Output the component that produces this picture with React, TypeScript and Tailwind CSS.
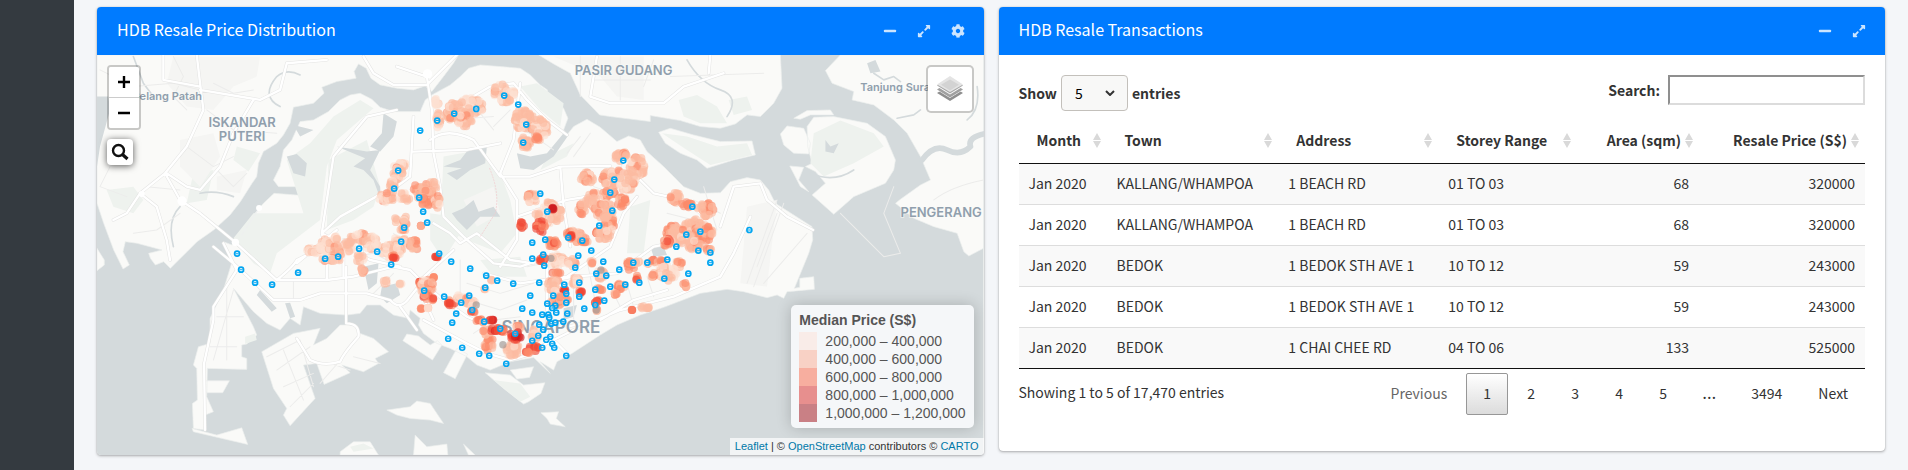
import React from "react";
import { FaCog, FaExpandAlt, FaMinus } from "react-icons/fa";

type Pt = [number, number];
type Blob = [number, number, number, number, number];

const SANS = "font-['Noto_Sans_CJK_SC','Open_Sans',sans-serif]";

/* ---------- Base map geometry (1 screen px = 3 map units) ---------- */

const LAND = [
  // Johor west
  "M291 165H1375L1360 190L1330 230L1295 275L1275 258L1240 270L1190 265L1140 255L1112 235L1098 205L1075 192L1062 215L1068 235L1010 245L965 262L972 280L940 310L880 322L870 370L850 405L830 430L790 455L775 490L770 530L756 550L721 605L690 645L641 690L591 725L561 755L511 805L491 785L466 795L451 775L446 760L486 750L411 730L376 725L369 755L388 795L369 807L341 750L311 670L291 610Z",
  "M291 745L313 780L313 795L291 812Z",
  // Singapore main island
  "M670 725L696 735L731 690L756 650L790 610L822 580L900 586L915 560L835 560L820 540L840 500L850 450L875 420L900 365L940 360L985 335L1020 300L1050 285L1080 280L1115 298L1140 322L1180 335L1260 335L1275 300L1295 285L1350 255L1380 230L1405 205L1440 195L1500 200L1560 205L1590 225L1620 255L1642 270L1635 300L1660 290L1690 325L1703 355L1690 390L1700 405L1720 380L1760 358L1800 382L1850 425L1885 408L1920 420L1940 455L1990 500L2020 530L2050 560L2100 580L2160 578L2190 545L2240 533L2280 540L2305 570L2325 610L2435 680L2437 720L2425 760L2382 865L2398 862L2398 835L2440 830L2442 868L2395 872L2360 875L2350 895L2330 885L2300 893L2230 875L2180 868L2100 880L1990 922L1920 945L1850 975L1800 1005L1715 1060L1670 1085L1660 1110L1620 1085L1650 1120L1600 1072L1530 1085L1470 1110L1430 1095L1400 1070L1350 1045L1310 1030L1270 1000L1255 975L1260 955L1230 930L1225 955L1180 945L1140 915L1100 915L1080 940L1040 945L960 940L910 920L900 975L870 955L840 990L800 970L760 935L700 865L760 980L770 1005L740 1032L725 1035V1070L740 1075V1108L622 1105L620 1190L640 1235L615 1245V1290L580 1285L577 1210L592 1200L590 1105L580 1095L595 1040L630 1030V955L670 870L696 785Z",
  // Jurong Island
  "M785 1055L880 1000L960 985L940 1035L980 1015L1020 975L1060 975L1080 1000L1120 1015L1165 1055L1125 1075L1135 1090L1090 1115L1025 1095L1050 1118L972 1153L950 1090L910 1095L945 1195L870 1277L850 1245L860 1225L820 1165Z",
  "M1220 1002L1255 1008L1290 1035L1312 1022L1325 1035L1297 1080L1208 1022ZM1370 1045L1402 1062L1365 1136L1330 1118Z",
  "M650 1305L725 1283L743 1333L580 1295L576 1285ZM610 1142H688L668 1178H610Z",
  // Southern islands
  "M1160 1230L1230 1220L1250 1203L1290 1210L1330 1270L1290 1260L1230 1255L1190 1245ZM1020 1355L1060 1325L1110 1325L1135 1365H1020ZM1245 1305L1280 1340L1340 1332L1343 1365H1240ZM1390 1332L1425 1365H1405Z",
  "M1455 1118L1530 1125L1570 1155L1634 1148L1622 1180L1585 1205L1570 1212L1510 1165ZM1530 1110L1600 1100L1588 1132L1550 1137ZM1622 1238L1675 1235L1668 1255L1695 1280L1650 1272L1640 1255Z",
  // Pasir Gudang
  "M1615 165H2340L2345 265L2320 310L2280 350L2240 345L2205 372L2160 385L2100 380L2040 362L1950 347V365L1830 350L1798 345L1740 285L1710 220L1660 192Z",
  // Ubin, Ketam, Tekong
  "M1975 397L2010 385L2080 405L2160 425L2255 423L2265 465L2200 480L2120 505L2090 480L2040 460L1995 430Z",
  "M2340 402L2360 378L2410 385L2430 430L2425 462L2380 460L2350 435ZM2380 355L2420 332L2490 330L2500 345L2430 345L2400 358Z",
  "M2420 380L2440 352L2500 350L2600 370L2655 410L2685 480L2680 510L2655 550L2560 590L2500 643L2435 585L2475 550L2445 515L2415 500L2435 490L2422 440ZM2368 498L2410 502L2395 540L2425 575L2400 560Z",
  // Johor east
  "M2520 165H2949V1365V745L2905 768L2890 755L2870 700L2800 680L2740 655L2685 610L2700 598L2760 555L2790 540L2760 470L2720 400L2680 360L2620 315L2555 300L2560 275L2495 250L2475 212Z",
];

const GREEN = [
  "M860 480L930 430L1000 350L1080 300L1120 325L1010 420L980 500L960 660L830 760L810 820L760 790L720 740L700 715L760 640L910 640Z",
  "M985 480L1100 420L1140 560L1120 620L1060 660L980 690Z",
  "M1330 470L1440 450L1500 520L1530 600L1550 700L1500 760L1400 720L1320 680Z",
  "M1290 640L1360 650L1380 700L1330 780L1290 720Z",
  "M1040 530L1110 520L1100 610L1040 620Z",
  "M580 520L640 510L620 600L560 610ZM320 570L400 560L430 600L400 640L340 620Z",
  "M710 440L780 460L745 515L700 480Z",
  "M1560 260L1610 250L1690 310L1680 380L1620 330Z",
  "M1640 470L1720 430L1700 470L1620 510Z",
  "M2035 300L2090 285L2150 320L2180 370L2100 370L2050 350ZM2185 300L2240 290L2255 330L2200 345Z",
  "M1985 400L2060 410L2150 440L2240 430L2255 465L2130 495L2060 450Z",
  "M2440 400L2520 362L2620 400L2650 440L2560 490L2470 530L2430 490Z",
  "M1890 620L1950 600L1930 760L1880 760Z",
  "M1440 780L1560 770L1580 830L1480 830Z",
  "M1480 1140L1560 1150L1590 1190L1560 1205Z",
  "M735 1010L765 1000L770 1020L735 1032Z",
  "M1050 1340L1090 1330L1120 1345L1060 1355Z",
];

const URBAN = [
  "M520 170L780 170L770 230L700 260L640 330L560 320L500 250Z",
  "M540 420L640 400L660 470L600 560L540 500Z",
  "M650 530L740 510L720 580L650 570Z",
  "M1660 170H1930V300L1850 290L1800 230Z",
  "M2240 620L2330 600L2300 860L2220 850Z",
  "M1390 600L1480 560L1500 640L1430 680Z",
];

const LAKES = [
  "M1330 500L1380 480L1400 455L1460 440L1455 490L1410 510L1370 540L1340 520L1385 505Z",
  "M1355 640L1390 625L1420 600L1435 635L1480 620L1500 650L1440 650L1400 690L1370 660Z",
  "M1550 460L1590 470L1640 460L1690 400L1705 405L1660 470L1600 510L1560 505Z",
  "M1150 340L1190 365L1180 410L1140 455L1110 440L1145 400ZM1010 440L1100 455L1140 450L1110 510L1140 560L1142 600L1120 540L1090 510L1060 500L1095 475Z",
  "M860 470L890 462L920 490L915 530L880 520ZM880 375L940 390L900 410Z",
  "M2475 420L2490 440L2515 430L2500 460L2475 455Z",
  "M1950 740L1990 740L2000 765L1960 770Z",
  "M1145 860L1190 850L1200 885L1160 910L1140 890Z",
  "M1690 925L1730 915L1720 950L1690 960Z",
  "M1090 800L1135 790L1130 850L1105 870Z",
  "M2600 190L2625 180L2640 215L2610 220Z",
  "M291 290H325L330 330L300 440L291 500Z",
  "M780 870L830 925L815 935L770 885ZM855 910L870 955L885 950L870 908Z",
];

const CREEKS = [
  "M900 225Q860 205 830 230Q780 290 840 320",
  "M2060 180Q2100 250 2160 270T2180 350",
  "M400 170L430 250L460 290",
  "M600 580Q650 570 700 590",
  "M2930 260Q2940 330 2900 360",
  "M2620 220L2650 240L2680 230L2700 245M2690 355L2740 345L2760 330",
  "M1560 380Q1610 420 1640 400",
  "M2430 520Q2500 550 2560 510",
  "M520 740Q500 660 540 620",
];

const MAJOR = [
  "M590 165L600 250L610 330L560 440L495 520L540 600L600 640L700 722L830 840",
  "M830 840H980L1060 830L1180 800L1230 810L1270 850L1330 900L1400 950L1470 980L1560 980",
  "M830 840Q880 800 890 780L930 760M640 740L700 790L820 900L900 900L960 880H1100L1170 900Q1200 935 1230 890L1270 840",
  "M1280 230L1295 330L1300 460L1320 560L1330 650L1390 710L1480 790L1560 800L1620 780",
  "M1290 420Q1340 380 1420 420L1500 530L1590 530L1680 500L1830 498",
  "M1240 455L1400 450L1500 430M1240 350L1230 530L1190 560M1200 550L1020 650L965 700L970 720",
  "M965 700L1000 470L1100 350L1190 330",
  "M965 700L1110 780L1200 800M890 790L1010 690",
  "M1300 670L1350 700L1380 730L1430 700L1530 780L1600 790",
  "M1350 330L1470 260L1540 250L1580 300L1640 360L1700 405",
  "M1560 250L1540 420L1500 520L1550 600L1550 720L1500 800",
  "M1550 650L1700 600L1760 590M1680 500L1690 620L1710 740",
  "M1920 540L1960 580L2050 600L2100 640M1910 590L1870 640L1830 740L1700 830",
  "M2160 680L2200 560L2280 550L2300 600L2360 650L2438 690",
  "M1600 1050L1720 990L1860 930L2020 890L2160 830L2200 760L2250 650",
  "M1700 980L1800 960L1900 900L2000 870M1620 850L1720 830L1850 820L1960 740L2060 720",
  "M1360 750L1250 850L1300 960M1450 820L1560 850L1700 830M1640 780L1640 1000L1700 1060",
  "M1270 960L1400 1030L1460 1060L1530 1080L1600 1060",
  "M1790 170L1770 290L1830 310H1990L2050 260L2170 220M2130 165L2125 220",
  "M490 165L490 240L600 260M600 270L780 300L840 270L860 190L980 180",
  "M495 520L420 580L380 640L340 660M500 520L560 560L600 570L660 500L700 400L760 300",
  "M420 580L470 620L500 720L510 780",
  "M1090 170L1120 220L1180 255L1280 255L1370 165M1190 200L1280 230",
  "M1038 800V970Q1080 970 1075 1010Q1030 1060 1020 1085Q970 1100 930 1080L890 1015",
  "M670 730L710 810L640 920L640 960L612 1090L615 1290",
  "M980 840V720M1030 830V720M1250 990L1200 920",
];

const MINOR = [
  "M300 210L400 260L520 250L600 270M520 170L550 230L520 290L560 330M640 250L700 280L760 270",
  "M330 500L300 560L380 590M400 700L470 690L540 640M560 440L640 500L700 470",
  "M650 510L700 560L740 520M620 330L700 390L830 400M440 560L540 570",
  "M1560 380L1660 450M1400 290L1480 390M1340 360L1480 350M1480 380L1530 330",
  "M1740 170V290M1860 170V300M1780 240H1950M1960 180L1930 260M2010 230L2290 220",
  "M680 860V1080M650 950H730M630 1040H710M700 870L640 1080",
  "M800 1070L900 1020M830 1110L930 1040M850 1160L940 1120M850 1050L910 1200M900 1020L940 1160M870 1220L940 1150",
  "M960 1150L1030 1070M990 1090L1050 1110M1060 1070L1140 1090",
  "M2240 850L2330 600M2260 860L2350 610M2290 850L2420 700M2270 800L2330 640",
  "M1580 800L1680 780L1690 870M1720 800V960M1760 780L1790 930M1830 860L1860 920M1880 850L1900 920M1940 830L1960 890",
  "M1400 850L1500 880L1600 850M1400 900L1500 930L1580 900M1380 780V880",
  "M1090 720V830M1180 700L1250 760M1120 880L1180 820",
  "M1740 410L1700 460M1720 470L1770 400M1870 480L1820 620M1780 560L1870 590",
  "M2080 600L2160 640M2110 560L2150 690M2000 640L2080 660",
  "M2800 600Q2850 560 2949 540M2680 560L2650 640L2700 760L2650 770L2520 640",
  "M880 840V900M1060 770L1120 760L1180 790M1420 1000L1480 960L1560 950",
];

/* ---------- Price points and station markers ---------- */

const BLOBS: { at: Pt; blobs: Blob[] }[] = [
  {
    at: [1200, 210],
    blobs: [
      [108, 97, 8, 10, 0.2], [114, 150, 10, 20, 0.5], [160, 125, 24, 24, 0.9], [212, 112, 34, 26, 0.7], [193, 150, 24, 18, 0.9],
      [300, 65, 18, 20, 0.8], [338, 70, 10, 6, 0.5], [316, 90, 14, 8, 0.9], [372, 150, 28, 30, 0.7], [418, 180, 22, 32, 0.8],
      [375, 218, 16, 16, 1.3], [410, 205, 6, 6, 1.9], [560, 325, 20, 16, 1.1], [662, 258, 18, 14, 1.2], [710, 290, 22, 32, 1.1],
      [640, 325, 32, 24, 1.1], [680, 335, 24, 24, 0.8], [625, 372, 20, 10, 1.5], [580, 390, 20, 20, 1], [544, 418, 10, 18, 1.3],
      [610, 420, 26, 22, 0.9], [665, 395, 14, 14, 1.9], [625, 460, 16, 28, 1.1], [590, 488, 5, 5, 2.6], [395, 385, 14, 16, 0.9],
      [445, 430, 36, 30, 0.6], [458, 416, 3, 3, 3.4], [364, 465, 8, 12, 2.4], [422, 470, 14, 16, 2.5], [520, 495, 22, 12, 1.5],
      [825, 385, 18, 16, 1.2], [860, 405, 14, 8, 2.1], [915, 420, 22, 20, 1.2], [880, 462, 24, 14, 0.9], [910, 490, 26, 24, 1.2],
      [818, 485, 22, 20, 1.4],
    ],
  },
  {
    at: [690, 360],
    blobs: [
      [508, 132, 20, 10, 0.4], [502, 160, 14, 18, 0.9], [486, 198, 8, 20, 0.8], [468, 235, 20, 16, 0.9], [525, 230, 16, 12, 0.6],
      [570, 212, 22, 20, 1.2], [602, 208, 20, 22, 1.1], [588, 243, 14, 14, 1.8], [620, 245, 8, 18, 1], [497, 300, 5, 6, 0.4],
      [525, 302, 6, 14, 1.1], [518, 330, 8, 6, 1], [572, 317, 1, 1, 2], [508, 365, 22, 12, 0.8], [552, 375, 14, 16, 1.1],
      [485, 393, 30, 20, 0.8], [492, 409, 7, 6, 2.8], [250, 395, 18, 14, 0.2], [285, 378, 18, 20, 0.5], [318, 352, 6, 8, 0.9],
      [320, 395, 14, 20, 1.3], [300, 420, 30, 6, 0.9], [355, 380, 14, 16, 0.6], [390, 352, 28, 12, 0.9], [424, 368, 22, 18, 0.5],
      [390, 415, 12, 10, 0.9], [397, 448, 6, 10, 1.3], [465, 485, 6, 7, 0.5], [510, 492, 5, 2, 0.4], [619, 411, 4, 2, 3],
      [570, 487, 3, 3, 2.7], [611, 473, 2, 2, 2.2],
    ],
  },
  {
    at: [1200, 690],
    blobs: [
      [80, 170, 18, 24, 1], [78, 195, 10, 12, 2.1], [98, 208, 2, 3, 2.6], [62, 236, 3, 2, 1.7], [85, 234, 2, 2, 0.8],
      [152, 218, 11, 9, 2.4], [182, 202, 14, 8, 0.6], [210, 215, 14, 14, 1], [218, 245, 5, 4, 2.3], [255, 178, 4, 4, 1],
      [273, 150, 1, 1, 0.9], [245, 272, 16, 5, 1.8], [265, 340, 14, 20, 1.6], [262, 305, 12, 10, 1.1], [292, 300, 22, 10, 2.9],
      [274, 271, 6, 4, 3.6], [335, 358, 20, 18, 0.6], [352, 290, 12, 6, 0.9], [347, 317, 15, 13, 3.1], [404, 315, 10, 18, 0.5],
      [400, 355, 13, 8, 2.4], [380, 367, 10, 3, 2], [468, 90, 24, 16, 0.5], [456, 40, 15, 12, 1.9], [425, 88, 10, 10, 2.5],
      [468, 128, 16, 4, 1.8], [515, 100, 12, 14, 0.9], [460, 168, 18, 20, 1], [492, 180, 3, 4, 3.4], [525, 152, 12, 12, 0.6],
      [540, 187, 5, 5, 2.7], [478, 213, 24, 14, 1.3], [573, 97, 6, 4, 1.1], [600, 133, 14, 12, 0.8], [600, 177, 12, 3, 1.6],
      [590, 243, 3, 5, 0.9], [590, 213, 8, 7, 2.5], [690, 108, 12, 14, 1.8], [735, 98, 34, 6, 1], [770, 92, 20, 4, 2],
      [835, 102, 14, 10, 1.1], [800, 128, 26, 22, 0.5], [760, 136, 6, 8, 1.5], [710, 145, 3, 8, 2.2], [662, 168, 10, 10, 2.1],
      [643, 192, 8, 3, 1.3], [855, 166, 7, 6, 1.3], [696, 240, 2, 1, 2.5], [732, 232, 14, 4, 0.8], [840, 20, 32, 22, 1.1],
      [798, 35, 11, 11, 1.9], [882, 45, 22, 14, 1.2], [922, 60, 10, 8, 1.5], [608, 15, 20, 14, 0.9], [545, 30, 18, 12, 1.5],
      [512, 18, 6, 5, 2.8],
    ],
  },
];

const TONES = ["#fee0d2", "#fcbba1", "#fb8a6a", "#ef4533", "#cb181d"];

function makeRandom(seed: number) {
  let s = seed;
  return () => {
    s = (s * 1664525 + 1013904223) % 4294967296;
    return s / 4294967296;
  };
}

function scatter() {
  const rnd = makeRandom(11);
  const dots: { x: number; y: number; fill: string }[] = [];
  for (const { at, blobs } of BLOBS) {
    for (const [cx, cy, rx, ry, level] of blobs) {
      const n = Math.round(4 + (rx * ry) / 15);
      for (let i = 0; i < n; i++) {
        const a = rnd() * Math.PI * 2;
        const r = Math.sqrt(rnd()) * 1.1;
        const tone = Math.max(0, Math.min(4, Math.round(level + (rnd() - 0.5) * 1.5)));
        dots.push({
          x: Math.round(at[0] + cx + Math.cos(a) * r * rx),
          y: Math.round(at[1] + cy + Math.sin(a) * r * ry),
          fill: TONES[tone],
        });
      }
    }
  }
  return dots;
}

const DOTS = scatter();
const GREY_DOTS: Pt[] = [[1428, 915], [1508, 1034], [1652, 775], [1802, 810], [1788, 930]];

const STATIONS: { at: Pt; pts: Pt[] }[] = [
  {
    at: [1200, 210],
    pts: [[312, 77], [228, 117], [162, 131], [354, 104], [111, 152], [60, 182], [378, 164], [369, 218], [669, 272], [642, 329], [630, 368], [636, 422], [597, 467], [420, 371], [441, 425], [876, 410], [900, 485], [858, 494], [1047, 480]],
  },
  {
    at: [690, 360],
    pts: [[504, 152], [492, 206], [567, 233], [579, 275], [591, 308], [522, 323], [513, 365], [387, 386], [441, 395], [285, 416], [324, 410], [483, 434], [204, 458], [126, 494], [75, 488], [33, 449], [21, 401], [627, 401], [663, 425], [720, 446], [768, 467], [801, 482], [765, 503], [582, 512], [642, 530], [717, 527]],
  },
  {
    at: [1200, 690],
    pts: [[435, 29], [504, 23], [546, 32], [339, 161], [396, 38], [396, 86], [429, 74], [432, 107], [534, 77], [573, 62], [525, 113], [609, 95], [657, 119], [699, 98], [741, 98], [801, 89], [828, 50], [894, 62], [930, 68], [930, 98], [864, 131], [792, 146], [717, 158], [675, 164], [630, 170], [588, 131], [618, 137], [585, 179], [537, 158], [537, 200], [492, 164], [498, 191], [498, 218], [459, 197], [417, 158], [390, 197], [366, 236], [396, 248], [441, 221], [465, 227], [456, 234], [426, 254], [444, 254], [468, 248], [501, 251], [552, 236], [585, 225], [612, 212], [447, 263], [417, 284], [453, 281], [465, 278], [489, 275], [429, 299], [414, 317], [396, 332], [450, 320], [438, 329], [456, 341], [426, 353], [462, 353], [498, 377], [345, 311], [300, 296], [252, 275], [216, 240], [183, 218], [168, 251], [156, 278], [144, 326], [186, 353], [237, 371], [267, 377], [318, 401]],
  },
];

const PLACES: { x: number; y: number; size: number; name: string }[] = [
  { x: 500, y: 299, size: 33, name: "Gelang Patah" },
  { x: 726, y: 382, size: 39, name: "ISKANDAR" },
  { x: 726, y: 424, size: 39, name: "PUTERI" },
  { x: 1870, y: 226, size: 39, name: "PASIR GUDANG" },
  { x: 2690, y: 273, size: 33, name: "Tanjung Surat" },
  { x: 2822, y: 652, size: 39, name: "PENGERANG" },
  { x: 1652, y: 1000, size: 51, name: "SINGAPORE" },
];

function SingaporeMap() {
  return (
    <svg
      className="absolute inset-0 h-full w-full"
      viewBox="291 165 2658 1200"
      preserveAspectRatio="xMidYMid slice"
      role="img"
      aria-label="Map of Singapore"
    >
      <rect x="0" y="0" width="3300" height="1500" fill="#d4dadc" />
      <path d={LAND.join("")} fill="#fafaf8" stroke="#eceeed" strokeWidth="2" />
      <path d={GREEN.join("")} fill="#eef2ee" />
      <path d={URBAN.join("")} fill="#f5f5f3" />
      <path d={LAKES.join("")} fill="#d4dadc" />
      <g fill="none" strokeLinejoin="round" strokeLinecap="round">
        <path d={CREEKS.join("")} stroke="#d4dadc" strokeWidth="5" />
        <path d="M2765 480Q2800 430 2840 450T2910 440Q2900 410 2960 400" stroke="#d4dadc" strokeWidth="17" />
        <path d={MINOR.join("")} stroke="#ececeb" strokeWidth="3" />
        <path d={MAJOR.join("")} stroke="#e4e4e3" strokeWidth="10" />
        <path d={MAJOR.join("")} stroke="#ffffff" strokeWidth="7" />
        <path d="M777 625L725 705" stroke="#eef0f0" strokeWidth="3" />
        <path d="M1468 505Q1500 580 1485 640L1440 710" stroke="#f1c9cb" strokeWidth="2" strokeDasharray="4 5" />
      </g>
      <g fill="#ffffff">
        <circle cx="546" cy="603" r="14" />
        <circle cx="706" cy="727" r="11" />
        <circle cx="1282" cy="222" r="14" />
        <circle cx="425" cy="582" r="9" />
        <circle cx="777" cy="624" r="9" />
      </g>
      <g
        fill="#909fad"
        stroke="#fafaf8"
        strokeWidth="5"
        strokeOpacity="0.7"
        paintOrder="stroke"
        textAnchor="middle"
        className="font-['Inter',sans-serif] font-semibold"
      >
        {PLACES.map((p) => (
          <text key={p.name} x={p.x} y={p.y} fontSize={p.size}>
            {p.name}
          </text>
        ))}
      </g>
      <g fillOpacity="0.62">
        {DOTS.map((d, i) => (
          <circle key={i} cx={d.x} cy={d.y} r="12" fill={d.fill} />
        ))}
        {GREY_DOTS.map(([x, y]) => (
          <circle key={x} cx={x} cy={y} r="11" fill="#9a908c" />
        ))}
      </g>
      {STATIONS.map(({ at, pts }) =>
        pts.map(([x, y]) => (
          <g key={`${at[0] + x}-${at[1] + y}`} transform={`translate(${at[0] + x} ${at[1] + y})`}>
            <circle r="7.5" fill="#ffffff" fillOpacity="0.45" stroke="#03a5f0" strokeWidth="5" />
            <path d="M-5 0H5" stroke="#03a5f0" strokeWidth="3" />
          </g>
        )),
      )}
    </svg>
  );
}

function LayersIcon() {
  return (
    <svg width="28" height="28" viewBox="0 0 28 28" aria-hidden="true">
      <path d="M1 18L14 10L27 18L14 26Z" fill="#8f8f8f" />
      <path d="M1 15L14 7L27 15L14 23Z" fill="#fff" />
      <path d="M1 14.5L14 6L27 14.5L14 22.5Z" fill="#a0a0a0" />
      <path d="M1 11.5L14 3L27 11.5L14 19.5Z" fill="#fff" />
      <path d="M1 10.5L14 2L27 10.5L14 18.5Z" fill="#a8a8a8" />
      <path d="M1 9.5L14 1L27 9.5L14 17Z" fill="#e4e4e4" />
      <path d="M5 9.8L14 4.5L23 9.8L14 15.5Z" fill="#d3d3d3" />
    </svg>
  );
}

function MapControls() {
  const item = "flex size-[30px] items-center justify-center bg-white";
  return (
    <>
      <div className="absolute left-[10px] top-[10px] overflow-hidden rounded border-2 border-black/20 bg-clip-padding">
        <button type="button" aria-label="Zoom in" className={`${item} box-content border-b border-[#ccc]`}>
          <svg width="12" height="12" viewBox="0 0 12 12" aria-hidden="true">
            <path d="M6 0V12M0 6H12" stroke="#000" strokeWidth="2.4" />
          </svg>
        </button>
        <button type="button" aria-label="Zoom out" className={item}>
          <svg width="12" height="12" viewBox="0 0 12 12" aria-hidden="true">
            <path d="M0 6H12" stroke="#000" strokeWidth="2.4" />
          </svg>
        </button>
      </div>
      <button
        type="button"
        aria-label="Search the map"
        className="absolute left-[10px] top-[84px] flex size-[26px] items-center justify-center rounded bg-white shadow-[0_1px_7px_rgba(0,0,0,0.65)]"
      >
        <svg width="18" height="18" viewBox="0 0 18 18" fill="none" stroke="#111" aria-hidden="true">
          <circle cx="7.5" cy="7.5" r="5.5" strokeWidth="2.4" />
          <path d="M11.5 11.5L16.5 16" strokeWidth="3.2" />
        </svg>
      </button>
      <button
        type="button"
        aria-label="Layers"
        className="absolute right-[10px] top-[10px] flex size-[48px] items-center justify-center rounded-[5px] border-2 border-black/20 bg-white bg-clip-padding"
      >
        <LayersIcon />
      </button>
    </>
  );
}

const LEGEND = [
  { color: "bg-[#f9ece8]", label: "200,000 – 400,000" },
  { color: "bg-[#f8d1c5]", label: "400,000 – 600,000" },
  { color: "bg-[#f7ae9f]", label: "600,000 – 800,000" },
  { color: "bg-[#e78f8e]", label: "800,000 – 1,000,000" },
  { color: "bg-[#c98085]", label: "1,000,000 – 1,200,000" },
];

function Legend() {
  return (
    <div className="absolute bottom-[27px] right-[10px] rounded-[5px] bg-[#f5f7f9] px-2 py-[6px] font-['Liberation_Sans',sans-serif] text-[14px] leading-[18px] text-[#555] shadow-[0_0_15px_rgba(0,0,0,0.2)]">
      <strong className="mb-[3px] block">Median Price (S$)</strong>
      <ul>
        {LEGEND.map((l) => (
          <li key={l.label} className="flex gap-2">
            <span className={`size-[18px] ${l.color}`} />
            <span>{l.label}</span>
          </li>
        ))}
      </ul>
    </div>
  );
}

function Card({ title, settings, children }: { title: string; settings?: boolean; children: React.ReactNode }) {
  const tool = "flex w-[34px] justify-center";
  return (
    <section className="overflow-hidden rounded bg-white shadow-[0_0_1px_rgba(0,0,0,0.25),0_1px_3px_rgba(0,0,0,0.3)]">
      <header className="flex h-12 items-center justify-between bg-[#007bff] pl-5 pr-[9px] text-white">
        <h2 className="pb-[5px] text-[16px] font-normal leading-[20px]">{title}</h2>
        <div className="flex text-[14px] text-white/80">
          <button type="button" aria-label={`Collapse ${title}`} className={tool}>
            <FaMinus />
          </button>
          <button type="button" aria-label={`Maximize ${title}`} className={tool}>
            <FaExpandAlt />
          </button>
          {settings && (
            <button type="button" aria-label={`Settings for ${title}`} className={tool}>
              <FaCog />
            </button>
          )}
        </div>
      </header>
      {children}
    </section>
  );
}

const COLUMNS = [
  { name: "Month", width: "w-[10.4%]", align: "text-left" },
  { name: "Town", width: "w-[20.3%]", align: "text-left" },
  { name: "Address", width: "w-[18.9%]", align: "text-left" },
  { name: "Storey Range", width: "w-[16.4%]", align: "text-left" },
  { name: "Area (sqm)", width: "w-[14.4%]", align: "text-right" },
  { name: "Resale Price (S$)", width: "w-[19.6%]", align: "text-right" },
];

const ROWS = [
  ["Jan 2020", "KALLANG/WHAMPOA", "1 BEACH RD", "01 TO 03", "68", "320000"],
  ["Jan 2020", "KALLANG/WHAMPOA", "1 BEACH RD", "01 TO 03", "68", "320000"],
  ["Jan 2020", "BEDOK", "1 BEDOK STH AVE 1", "10 TO 12", "59", "243000"],
  ["Jan 2020", "BEDOK", "1 BEDOK STH AVE 1", "10 TO 12", "59", "243000"],
  ["Jan 2020", "BEDOK", "1 CHAI CHEE RD", "04 TO 06", "133", "525000"],
];

function SortIcon() {
  return (
    <svg width="8" height="15" viewBox="0 0 8 15" className="absolute right-[6px] top-[14px]" aria-hidden="true">
      <path d="M4 0L8 7H0ZM0 8H8L4 15Z" fill="#d9d9d9" />
    </svg>
  );
}

function Transactions() {
  const page = "h-[42px] min-w-[42px] rounded-[2px] border px-4 pb-[3px]";
  return (
    <div className="p-5 pb-[36px] text-[14px] leading-[24px] text-[#333]">
      <div className="flex h-[44px] items-start justify-between font-bold">
        <label className="flex items-center gap-1">
          Show
          <span className="relative flex items-center">
            <select
              defaultValue="5"
              className="h-[36px] w-[67px] appearance-none rounded border border-[#c3c0bb] bg-[#f8f8f7] pl-[13px] text-[14px] font-normal text-black"
            >
              <option>5</option>
              <option>10</option>
              <option>25</option>
            </select>
            <svg width="10" height="6" viewBox="0 0 10 6" className="pointer-events-none absolute right-[13px]" aria-hidden="true">
              <path d="M1 1L5 5L9 1" fill="none" stroke="#333" strokeWidth="2" />
            </svg>
          </span>
          entries
        </label>
        <label className="flex items-center gap-2">
          Search:
          <input
            type="search"
            className="h-[30px] w-[197px] border-2 border-b-[#dcdcdc] border-l-[#8f8f8f] border-r-[#dcdcdc] border-t-[#8f8f8f] bg-white px-1 font-normal"
          />
        </label>
      </div>
      <table className="w-full table-fixed border-separate border-spacing-0 border-b border-[#111]">
        <thead>
          <tr>
            {COLUMNS.map((c) => (
              <th key={c.name} scope="col" className={`relative h-[45px] whitespace-nowrap border-b border-[#111] px-[18px] pb-[2px] font-bold ${c.width} ${c.align}`}>
                {c.name}
                <SortIcon />
              </th>
            ))}
          </tr>
        </thead>
        <tbody>
          {ROWS.map((row, i) => (
            <tr key={i} className="group odd:bg-[#f9f9f9]">
              {row.map((cell, j) => (
                <td key={j} className={`h-[41px] whitespace-nowrap border-t border-[#ddd] px-[10px] pb-[2px] group-first:h-[40px] group-first:border-t-0 ${COLUMNS[j].align}`}>
                  {cell}
                </td>
              ))}
            </tr>
          ))}
        </tbody>
      </table>
      <div className="flex items-start justify-between pt-1">
        <p className="pt-[7px]">Showing 1 to 5 of 17,470 entries</p>
        <nav aria-label="Pages" className="flex gap-[2px]">
          <button type="button" disabled className={`${page} border-transparent text-[#666]`}>
            Previous
          </button>
          <button type="button" aria-current="page" className={`${page} border-[#979797] bg-linear-to-b from-white to-[#dcdcdc]`}>
            1
          </button>
          {["2", "3", "4", "5"].map((n) => (
            <button key={n} type="button" className={`${page} border-transparent`}>
              {n}
            </button>
          ))}
          <span className="px-4 py-[7px] font-['Open_Sans',sans-serif] text-[18px]">…</span>
          <button type="button" className={`${page} border-transparent`}>
            3494
          </button>
          <button type="button" className={`${page} border-transparent`}>
            Next
          </button>
        </nav>
      </div>
    </div>
  );
}

export default function App() {
  return (
    <div className={`flex min-h-screen bg-[#f4f6f9] ${SANS}`}>
      <aside className="w-[74px] shrink-0 bg-[#343a40]" />
      <main className="grid min-w-0 flex-1 grid-cols-2 items-start gap-[15px] px-[23px] pb-[15px] pt-[7px]">
        <Card title="HDB Resale Price Distribution" settings>
          <div className="relative h-[400px] overflow-hidden">
            <SingaporeMap />
            <MapControls />
            <Legend />
            <p className="absolute bottom-0 right-0 bg-white/70 px-[5px] font-['Liberation_Sans',sans-serif] text-[11px] leading-[17px] text-[#333]">
              <a href="#leaflet" className="text-[#0078a8]">Leaflet</a> | ©{" "}
              <a href="#osm" className="text-[#0078a8]">OpenStreetMap</a> contributors ©{" "}
              <a href="#carto" className="text-[#0078a8]">CARTO</a>
            </p>
          </div>
        </Card>
        <Card title="HDB Resale Transactions">
          <Transactions />
        </Card>
      </main>
    </div>
  );
}
